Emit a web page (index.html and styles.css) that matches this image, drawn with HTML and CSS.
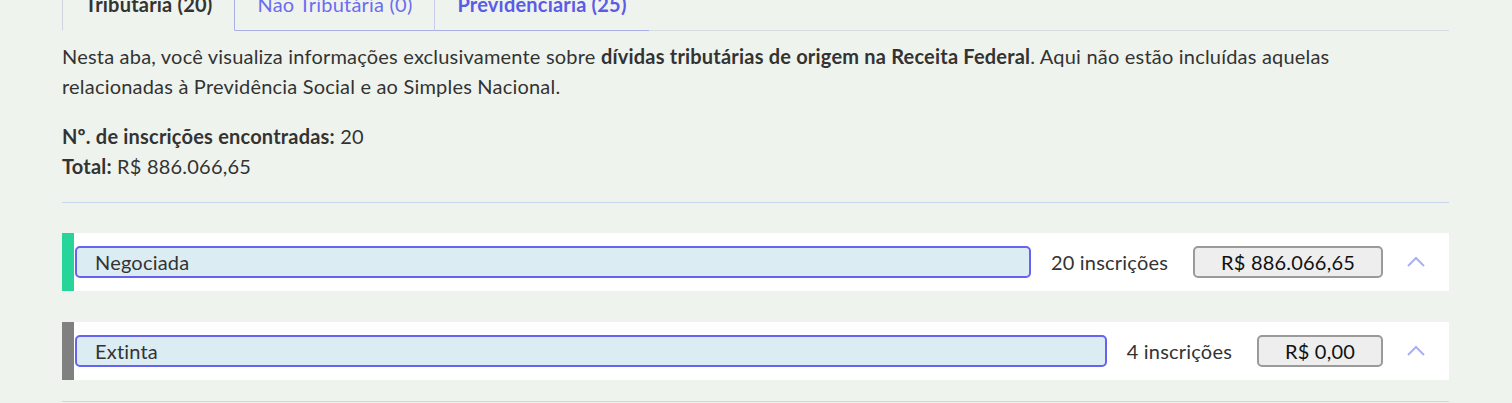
FILE: index.html
```html
<!DOCTYPE html>
<html lang="pt-BR">
<head>
<meta charset="utf-8">
<link rel="stylesheet" href="styles.css">
</head>
<body>
<div class="page">
  <div class="tabs">
    <div class="tab active">Tributária (20)</div>
    <div class="tab t2">Não Tributária (0)</div>
    <div class="tab t3">Previdenciária (25)</div>
    <div class="tab-fill"></div>
  </div>
  <p class="desc">Nesta aba, você visualiza informações exclusivamente sobre <b>dívidas tributárias de origem na Receita Federal</b>. Aqui não estão incluídas aquelas relacionadas à Previdência Social e ao Simples Nacional.</p>
  <div class="stats">
    <div><b>Nº. de inscrições encontradas:</b> 20</div>
    <div><b>Total:</b> R$ 886.066,65</div>
  </div>
  <div class="sep"></div>
  <div class="group">
    <div class="bar green"></div>
    <div class="label">Negociada</div>
    <div class="count">20 inscrições</div>
    <div class="value">R$ 886.066,65</div>
    <div class="chev"><svg width="20" height="12" viewBox="0 0 20 12"><path d="M2 10 L10 2 L18 10" fill="none" stroke="#aab0f2" stroke-width="2"/></svg></div>
  </div>
  <div class="group">
    <div class="bar grey"></div>
    <div class="label">Extinta</div>
    <div class="count">4 inscrições</div>
    <div class="value">R$ 0,00</div>
    <div class="chev"><svg width="20" height="12" viewBox="0 0 20 12"><path d="M2 10 L10 2 L18 10" fill="none" stroke="#aab0f2" stroke-width="2"/></svg></div>
  </div>
  <div class="sep bottom"></div>
</div>
</body>
</html>
```
FILE: styles.css
```css
html, body {
  margin: 0;
  padding: 0;
  background: #eff3ee;
  overflow: hidden;
}
body {
  font-family: Lato, "Noto Sans", sans-serif;
  color: #333;
  font-size: 20px;
  letter-spacing: 0.2px;
}
.page {
  margin-left: 62px;
  width: 1387px;
}
.tabs {
  display: flex;
  margin-top: -17px;
  height: 48px;
}
.tab {
  padding: 9px 22px 15px;
  line-height: 24px;
  border-bottom: 1px solid #aab0e6;
  white-space: nowrap;
}
.tab.active {
  font-weight: 700;
  color: #333;
  border-left: 1px solid #cfd3e0;
  border-right: 1px solid #aab0e6;
  border-bottom: 1px solid transparent;
}
.tab.t2 {
  color: #6b6cef;
  border-right: 1px solid #c8ccea;
}
.tab.t3 {
  color: #5a5ce6;
  font-weight: 700;
}
.tab-fill {
  flex: 1;
  border-bottom: 1px solid #d6dde0;
}
.desc {
  margin: 10px 0 0;
  max-width: 1340px;
  line-height: 30px;
}
.desc b, .stats b {
  font-weight: 700;
}
.stats {
  margin-top: 20px;
  line-height: 30px;
}
.sep {
  margin-top: 21px;
  height: 1px;
  background: #c8d4ee;
}
.group {
  margin-top: 30px;
  height: 58px;
  background: #fff;
  display: flex;
  align-items: center;
}
.group + .group {
  margin-top: 31px;
}
.bar {
  width: 12px;
  align-self: stretch;
}
.bar.green { background: #27d49a; }
.bar.grey { background: #808080; }
.label {
  flex: 1;
  margin-left: 1px;
  height: 28px;
  line-height: 28px;
  background: #dcecf3;
  border: 2px solid #6563f0;
  border-radius: 5px;
  padding-left: 18px;
  color: #333;
}
.count {
  margin-left: 20px;
  color: #333;
  white-space: nowrap;
}
.value {
  margin-left: 25px;
  height: 28px;
  line-height: 28px;
  padding: 0 26px;
  background: #eeeeee;
  border: 2px solid #9a9a9a;
  border-radius: 5px;
  color: #111;
  white-space: nowrap;
}
.chev {
  width: 66px;
  display: flex;
  justify-content: center;
  align-items: center;
}
.sep.bottom {
  margin-top: 21px;
  background: #d0d6e6;
}
```
